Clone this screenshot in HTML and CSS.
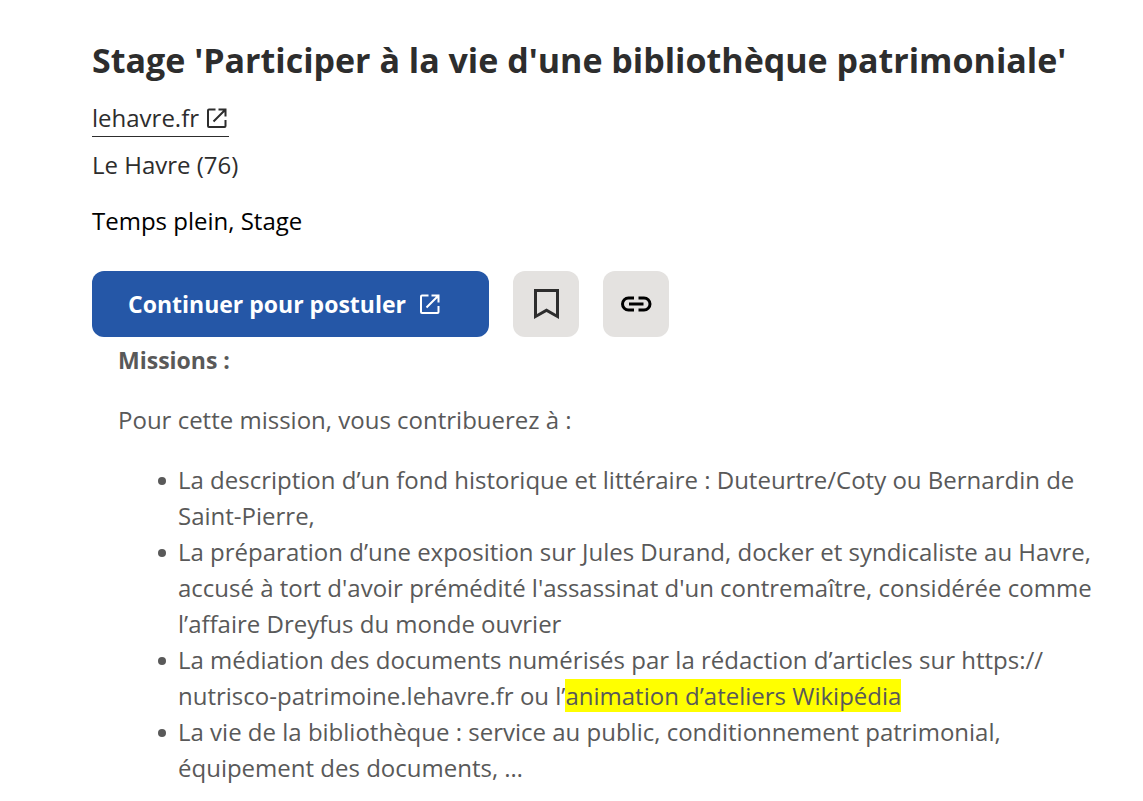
FILE: index.html
```html
<!DOCTYPE html>
<html lang="fr">
<head>
<meta charset="utf-8">
<meta name="viewport" content="width=device-width, initial-scale=1">
<title>Stage bibliothèque patrimoniale</title>
<link rel="stylesheet" href="styles.css">
</head>
<body>
<main class="job">
  <h1 class="job-title">Stage 'Participer à la vie d'une bibliothèque patrimoniale'</h1>
  <a class="company" href="#">lehavre.fr
    <svg class="company-icon" viewBox="0 0 24 24" aria-hidden="true"><path d="M10.500 3.500H4q-1 0-1 1V20q0 1 1 1h15.500q1 0 1-1v-6M8.500 15.500L19 5"/><path class="arrow-head" d="M13.500 2.500h8v8h-2V6.500l-2-2h-4z"/></svg>
  </a>
  <p class="location">Le Havre (76)</p>
  <p class="contract">Temps plein, Stage</p>
  <div class="actions">
    <button class="apply" type="button">Continuer pour postuler
      <svg class="apply-icon" viewBox="0 0 24 24" aria-hidden="true"><path d="M10.500 3.500H4q-1 0-1 1V20q0 1 1 1h15.500q1 0 1-1v-6M8.500 15.500L19 5"/><path class="arrow-head" d="M13.500 2.500h8v8h-2V6.500l-2-2h-4z"/></svg>
    </button>
    <button class="square" type="button" aria-label="Enregistrer">
      <svg class="square-icon" viewBox="0 0 36 36" aria-hidden="true"><path class="bookmark" d="M6 3h25v30l-12.500-7L6 33zM9 6v22l9.500-5.500L28 28V6z"/></svg>
    </button>
    <button class="square" type="button" aria-label="Copier le lien">
      <svg class="square-icon link-icon" viewBox="0 0 36 36" aria-hidden="true"><path d="M16 12h-5.500a6 6 0 0 0 0 12H16M20.500 12h5.500a6 6 0 0 1 0 12h-5.500M11 18h14.500"/></svg>
    </button>
  </div>
  <section class="description">
    <h2 class="missions">Missions :</h2>
    <p class="intro">Pour cette mission, vous contribuerez à :</p>
    <ul class="tasks">
      <li>La description d’un fond historique et littéraire : Duteurtre/Coty ou Bernardin de<br>Saint-Pierre,</li>
      <li>La préparation d’une exposition sur Jules Durand, docker et syndicaliste au Havre,<br>accusé à tort d'avoir prémédité l'assassinat d'un contremaître, considérée comme<br>l’affaire Dreyfus du monde ouvrier</li>
      <li>La médiation des documents numérisés par la rédaction d’articles sur https://<br>nutrisco-patrimoine.lehavre.fr ou l’<mark class="highlight">animation d’ateliers Wikipédia</mark></li>
      <li>La vie de la bibliothèque : service au public, conditionnement patrimonial,<br>équipement des documents, …</li>
    </ul>
  </section>
</main>
</body>
</html>
```
FILE: styles.css
```css
* { box-sizing: border-box; }
body {
  margin: 0;
  background: #fff;
  color: #2d2d2d;
  font-family: "Open Sans", "Noto Sans", sans-serif;
  font-size: 24px;
  line-height: 36px;
}
.job { padding: 36px 24px 0 92px; }
.job-title {
  margin: 0;
  font-size: 34px;
  line-height: 48px;
  font-weight: 700;
}
.company {
  display: inline-flex;
  align-items: center;
  gap: 6px;
  margin-top: 16px;
  border-bottom: 1px solid #2d2d2d;
  color: #2d2d2d;
  text-decoration: none;
}
.company-icon, .apply-icon {
  width: 24px;
  height: 24px;
  fill: none;
  stroke: currentColor;
  stroke-width: 2;
}
.arrow-head, .bookmark { fill: currentColor; stroke: none; }
.bookmark { fill-rule: evenodd; }
.location { margin: 10px 0 0; }
.contract { margin: 20px 0 0; color: #000; }
.actions { display: flex; gap: 24px; margin-top: 32px; }
.apply {
  display: flex;
  align-items: center;
  gap: 12px;
  width: 397px;
  height: 66px;
  padding: 0 36px;
  border: 0;
  border-radius: 12px;
  background: #2557a7;
  color: #fff;
  font: inherit;
  font-size: 23px;
  font-weight: 700;
  white-space: nowrap;
}
.square {
  display: grid;
  place-items: center;
  width: 66px;
  height: 66px;
  padding: 0;
  border: 0;
  border-radius: 12px;
  background: #e4e2e0;
  color: #2d2d2d;
}
.square-icon {
  width: 36px;
  height: 36px;
  fill: none;
  stroke: currentColor;
  stroke-width: 3;
}
.link-icon { color: #000; }
.description { padding-left: 26px; color: #595959; }
.missions { margin: 5px 0 0; font-size: 23px; line-height: 36px; font-weight: 700; }
.intro { margin: 24px 0 0; }
.tasks { margin: 24px 0 0; padding-left: 60px; list-style: none; }
.tasks li::before {
  content: "";
  float: left;
  width: 8px;
  height: 8px;
  margin: 15px 12px 0 -20px;
  border-radius: 50%;
  background: currentColor;
}
.highlight { background: #ff0; color: inherit; }
```
